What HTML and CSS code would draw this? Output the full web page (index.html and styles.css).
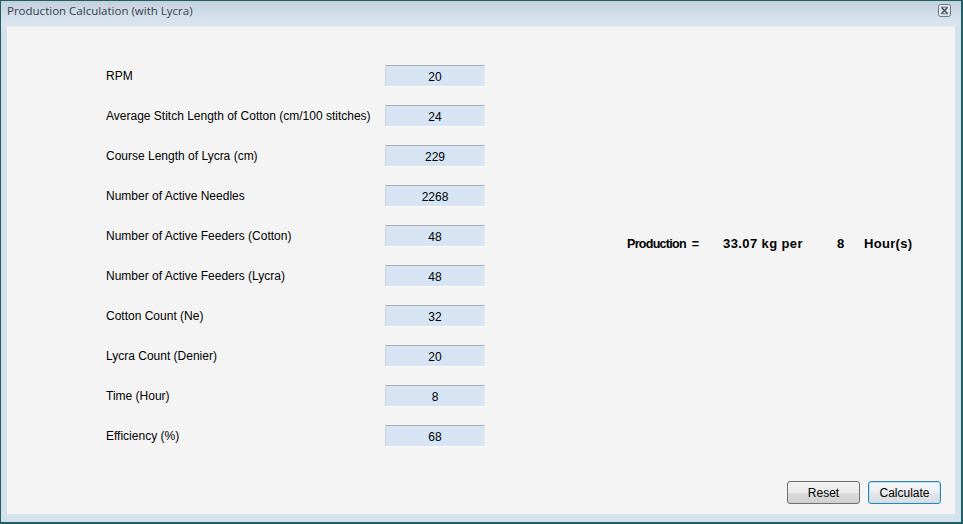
FILE: index.html
```html
<!DOCTYPE html>
<html>
<head>
<meta charset="utf-8">
<link rel="stylesheet" href="styles.css">
</head>
<body>
<div class="window">
  <div class="titlebar">
    <span class="title">Production Calculation (with Lycra)</span>
    <span class="close"><svg width="13" height="13" viewBox="0 0 13 13"><rect x="0.5" y="0.5" width="12" height="12" rx="2" fill="#e4e9ef" stroke="#6b7785"/><path d="M3.5 3.5 L9.5 9.5 M9.5 3.5 L3.5 9.5" stroke="#4a5360" stroke-width="1.6"/><path d="M3 3.2 H10 M3 9.8 H10" stroke="#4a5360" stroke-width="0.8"/></svg></span>
  </div>
  <div class="client">
    <div class="main">
      <div class="form">
        <div class="row"><span class="label">RPM</span><span class="box">20</span></div>
        <div class="row"><span class="label">Average Stitch Length of Cotton (cm/100 stitches)</span><span class="box">24</span></div>
        <div class="row"><span class="label">Course Length of Lycra (cm)</span><span class="box">229</span></div>
        <div class="row"><span class="label">Number of Active Needles</span><span class="box">2268</span></div>
        <div class="row"><span class="label">Number of Active Feeders (Cotton)</span><span class="box">48</span></div>
        <div class="row"><span class="label">Number of Active Feeders (Lycra)</span><span class="box">48</span></div>
        <div class="row"><span class="label">Cotton Count (Ne)</span><span class="box">32</span></div>
        <div class="row"><span class="label">Lycra Count (Denier)</span><span class="box">20</span></div>
        <div class="row"><span class="label">Time (Hour)</span><span class="box">8</span></div>
        <div class="row"><span class="label">Efficiency (%)</span><span class="box">68</span></div>
      </div>
      <div class="result">
        <span class="r-label">Production =</span>
        <span class="r-value">33.07 kg per</span>
        <span class="r-time">8</span>
        <span class="r-unit">Hour(s)</span>
      </div>
    </div>
    <div class="footer">
      <button class="btn">Reset</button>
      <button class="btn btn-default">Calculate</button>
    </div>
  </div>
</div>
</body>
</html>
```
FILE: styles.css
```css
html, body {
  margin: 0;
  padding: 0;
  background: #2c6a6e;
}
.window {
  width: 963px;
  height: 524px;
  box-sizing: border-box;
  border: 1px solid #1f5f63;
  border-width: 1px 2px 2px 1px;
  background: #d5e1ec;
  display: flex;
  flex-direction: column;
  font-family: "Liberation Sans", Arial, sans-serif;
  font-size: 12px;
  color: #000;
}
.titlebar {
  height: 25px;
  flex: none;
  display: flex;
  align-items: center;
  justify-content: space-between;
  padding: 0 0 0 6px;
  background: linear-gradient(#c3cfdb, #d3dfea 60%, #dae5f0);
}
.title {
  font-family: "Open Sans", "Noto Sans", sans-serif;
  font-size: 11.5px;
  color: #36404c;
  margin-top: -6px;
}
.close {
  display: flex;
  margin-right: 10px;
  margin-top: -6px;
}
.client {
  flex: 1;
  margin: 0 6px 8px 6px;
  background: #f4f4f4;
  border-top: 1px solid #e8ecf0;
  display: flex;
  flex-direction: column;
}
.main {
  flex: 1;
  display: flex;
}
.form {
  padding: 29px 0 0 99px;
  display: flex;
  flex-direction: column;
}
.row {
  height: 40px;
  display: flex;
  align-items: center;
}
.label {
  width: 279px;
}
.box {
  width: 98px;
  height: 19px;
  box-sizing: content-box;
  background: #d6e4f3;
  border-top: 1px solid #a7adb3;
  border-left: 1px solid #d0d4d8;
  border-right: 1px solid #e9ecef;
  border-bottom: 1px solid #ffffff;
  display: flex;
  align-items: center;
  justify-content: center;
  font-size: 12px;
  padding-top: 1px;
}
.result {
  padding: 209px 0 0 142px;
  display: flex;
  align-items: baseline;
  font-weight: bold;
  font-size: 13px;
}
.r-label { width: 96px; font-size: 12.5px; letter-spacing: -0.7px; word-spacing: 3px; }
.r-value { width: 114px; letter-spacing: 0.4px; }
.r-time { width: 27px; }
.r-unit { letter-spacing: 0.3px; }
.footer {
  display: flex;
  justify-content: flex-end;
  gap: 8px;
  padding: 0 14px 10px 0;
}
.btn {
  width: 73px;
  height: 23px;
  box-sizing: border-box;
  font-family: "Liberation Sans", Arial, sans-serif;
  font-size: 12px;
  color: #000;
  border: 1px solid #707070;
  border-radius: 3px;
  background: linear-gradient(#f2f2f2 0%, #ebebeb 50%, #dddddd 51%, #cfcfcf 100%);
  padding: 0;
}
.btn-default {
  border-color: #3c7fb1;
  background: linear-gradient(#f4f6f8 0%, #eceff1 50%, #e2e6e9 51%, #d8dde1 100%);
  box-shadow: inset 0 0 0 1px #b5e1f5;
}
```
